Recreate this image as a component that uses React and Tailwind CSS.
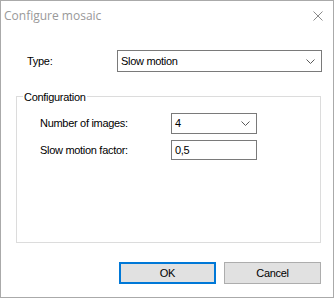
import React from "react";

const Chevron = () => (
  <svg width="9" height="5" viewBox="0 0 9 5" className="text-[#5a5a5a]">
    <path d="M0.5 0.5 L4.5 4.5 L8.5 0.5" fill="none" stroke="currentColor" strokeWidth="1" />
  </svg>
);

const ComboBox = ({ value, className }) => (
  <div
    className={
      "flex items-center justify-between border border-[#7a7a7a] bg-white pl-[3px] pr-[6px] " +
      className
    }
  >
    <span>{value}</span>
    <Chevron />
  </div>
);

export default function App() {
  return (
    <div
      className="w-[334px] h-[298px] flex flex-col border border-[#aaaaaa] bg-white text-[11px] text-black tracking-[-0.3px]"
      style={{ fontFamily: '"Liberation Sans", Arial, sans-serif' }}
    >
      {/* title bar */}
      <div className="h-[29px] flex items-center justify-between pl-[3px] pr-[10px] shrink-0">
        <span
          className="text-[12px] text-[#999999] tracking-normal"
          style={{ fontFamily: '"Open Sans", "Noto Sans", sans-serif' }}
        >
          Configure mosaic
        </span>
        <svg width="10" height="10" viewBox="0 0 10 10" className="text-[#8a8a8a]">
          <path d="M0.5 0.5 L9.5 9.5 M9.5 0.5 L0.5 9.5" stroke="currentColor" strokeWidth="1" />
        </svg>
      </div>

      {/* type row */}
      <div className="mt-[20px] flex items-center pl-[26px]">
        <span className="w-[90px]">Type:</span>
        <ComboBox value="Slow motion" className="w-[205px] h-[22px]" />
      </div>

      {/* configuration group */}
      <div className="relative mt-[24px] ml-[15px] w-[305px] h-[147px] border border-[#dcdcdc] pt-[16px] pl-[23px]">
        <span className="absolute -top-[8px] left-[6px] bg-white px-[1px]">Configuration</span>
        <div className="flex items-center">
          <span className="w-[131px]">Number of images:</span>
          <ComboBox value="4" className="w-[86px] h-[21px]" />
        </div>
        <div className="mt-[6px] flex items-center">
          <span className="w-[131px]">Slow motion factor:</span>
          <div className="w-[86px] h-[20px] border border-[#7a7a7a] bg-white pl-[3px] flex items-center">
            0,5
          </div>
        </div>
      </div>

      {/* buttons */}
      <div className="mt-[19px] flex justify-end gap-[8px] pr-[12px]">
        <button className="w-[97px] h-[22px] border-2 border-[#0078d7] bg-[#e1e1e1] text-[11px]">
          OK
        </button>
        <button className="w-[97px] h-[22px] border border-[#adadad] bg-[#e1e1e1] text-[11px]">
          Cancel
        </button>
      </div>
    </div>
  );
}
